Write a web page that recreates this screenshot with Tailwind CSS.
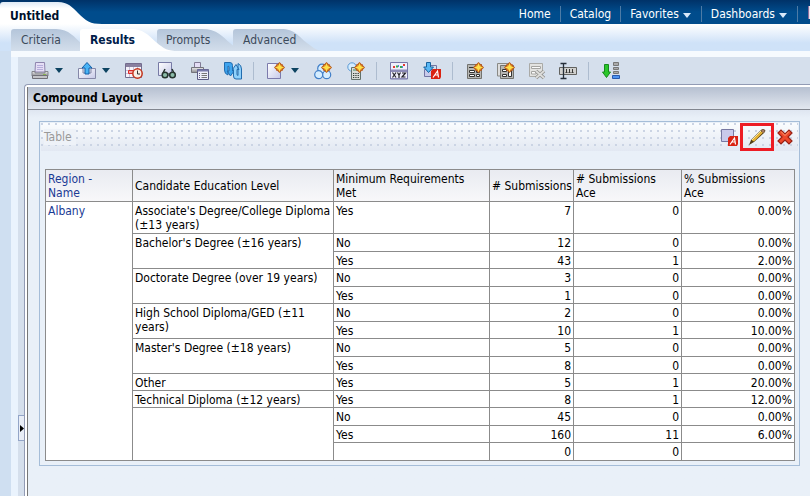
<!DOCTYPE html>
<html lang="en">
<head>
  <meta charset="UTF-8">
  <title>Untitled - Compound Layout</title>
  <meta name="viewport" content="width=device-width, initial-scale=1.0">
  <script src="https://cdn.jsdelivr.net/npm/@tailwindcss/browser@4"></script>
</head>
<body class="min-h-screen flex flex-col overflow-x-hidden bg-[#cfdff1] font-['DejaVu_Sans_Condensed','DejaVu_Sans',sans-serif] text-xs text-black">
  <!-- Shared shapes -->
  <svg class="absolute size-0" aria-hidden="true">
    <defs>
      <linearGradient id="tabFill" x1="0" y1="0" x2="0" y2="1"><stop offset="0" stop-color="#b4c5da"/><stop offset="1" stop-color="#d3deeb"/></linearGradient>
      <linearGradient id="whiteFill" x1="0" y1="0" x2="0" y2="1"><stop offset="0" stop-color="#dfeaf6"/><stop offset=".3" stop-color="#fff"/><stop offset="1" stop-color="#fff"/></linearGradient>
      <linearGradient id="metal" x1="0" y1="0" x2="0" y2="1"><stop offset="0" stop-color="#eee"/><stop offset="1" stop-color="#8a8a90"/></linearGradient>
      <linearGradient id="page" x1="0" y1="0" x2="1" y2="1"><stop offset="0" stop-color="#fff"/><stop offset="1" stop-color="#c6c9e8"/></linearGradient>
      <symbol id="star" viewBox="0 0 10 10"><path d="M5 0 7 2 8 2 8 3 10 5 8 7 8 8 7 8 5 10 3 8 2 8 2 7 0 5 2 3 2 2 3 2Z" fill="#b9561a"/><path d="M5 .8 6.300 3.700 9.200 5 6.300 6.300 5 9.200 3.700 6.300.8 5 3.700 3.700Z" fill="#ffe04a"/><path d="M2.500 2.500 4 3.500 3.500 4.500Z M7.500 2.500 6.500 4 6 3.500Z M7.500 7.500 6 6.500 6.500 6Z M2.500 7.500 3.500 6 4 6.500Z" fill="#f6a21c"/></symbol>
      <symbol id="redA" viewBox="0 0 10 10"><path d="M0 2 2 0H10V8L9 10H0Z" fill="#d92312"/><path d="M2 8.500 6.500 2 7.500 8.500M4 6H7" fill="none" stroke="#fff" stroke-width="1.200"/></symbol>
    </defs>
  </svg>

  <!-- Global header -->
  <header class="relative flex h-6 justify-between bg-linear-to-b from-[#003268] to-[#004c8c] to-50%">
    <button class="relative h-6 pl-[10px] pt-2 pr-10 text-left font-bold leading-4 text-[#00102c]">
      <svg class="absolute left-0 top-[2px] h-[22px] w-[102px]" viewBox="0 0 102 22"><path d="M0 22V3Q0 0 3 0H58C68 0 72 5 78 11C86 19 90 22 102 22Z" fill="url(#whiteFill)"/></svg>
      <span class="relative">Untitled</span>
    </button>
    <nav class="flex items-end pb-[2px] text-white leading-4">
      <a href="#" class="px-[9px]">Home</a>
      <a href="#" class="border-l border-[#4d7ba6] px-[9px]">Catalog</a>
      <a href="#" class="flex items-center gap-1 border-l border-[#4d7ba6] pl-[9px] pr-[10px]">Favorites
        <svg class="mt-[2px] h-[5px] w-2" viewBox="0 0 8 5"><path d="M0 0H8L4 5Z" fill="#d8e9fa"/></svg></a>
      <a href="#" class="flex items-center gap-1 border-l border-[#4d7ba6] pl-[9px] pr-[10px]">Dashboards
        <svg class="mt-[2px] h-[5px] w-2" viewBox="0 0 8 5"><path d="M0 0H8L4 5Z" fill="#d8e9fa"/></svg></a>
      <span class="flex border-l border-[#4d7ba6] pl-[10px]"><svg class="h-4 w-[2px]" viewBox="0 0 2 16"><path d="M0 0H2V13H0Z" fill="#e7e0ee"/><path d="M0 0H1V13H0Z" fill="#8d6f9c"/></svg></span>
    </nav>
  </header>

  <!-- Editor tabs -->
  <div class="flex h-[27px] bg-linear-to-b from-white to-[#cfe2f8] to-70% pl-[11px] leading-4 text-[#3c4a5a]">
    <button class="relative h-[27px] w-[69px] pl-[10px] pt-[5px] text-left">
      <svg class="absolute left-0 top-[5px] h-[22px] w-[80px]" viewBox="0 0 80 22"><path d="M0 22V3Q0 0 3 0H45C58 0 64 9 70 14C75 20 78 22 80 22Z" fill="url(#tabFill)"/></svg>
      <span class="relative">Criteria</span>
    </button>
    <button class="relative z-10 h-[27px] w-[77px] pl-[10px] pt-[5px] text-left font-bold text-[#00204a]">
      <svg class="absolute left-0 top-[5px] h-[22px] w-[98px]" viewBox="0 0 98 22"><path d="M0 22V3Q0 0 3 0H50C64 0 68 6 76 13C84 20 88 22 98 22Z" fill="#fff"/></svg>
      <span class="relative">Results</span>
    </button>
    <button class="relative h-[27px] w-[76px] pl-[9px] pt-[5px] text-left">
      <svg class="absolute left-0 top-[5px] h-[22px] w-[90px]" viewBox="0 0 90 22"><path d="M0 22V3Q0 0 3 0H45C60 0 66 8 73 14C80 20 82 22 90 22Z" fill="url(#tabFill)"/></svg>
      <span class="relative">Prompts</span>
    </button>
    <button class="relative h-[27px] w-[92px] pl-[10px] pt-[5px] text-left">
      <svg class="absolute left-0 top-[5px] h-[22px] w-[92px]" viewBox="0 0 92 22"><path d="M0 22V3Q0 0 3 0H48C62 0 66 8 74 14C82 20 84 22 92 22Z" fill="url(#tabFill)"/></svg>
      <span class="relative">Advanced</span>
    </button>
  </div>

  <main class="ml-[11px] flex flex-1 flex-col bg-[#eaf3fd] pl-[7px]">
    <div class="-ml-[7px] h-[6px] bg-[#f6fafe]"></div>
    <div class="relative flex flex-1 flex-col bg-[#d5dfec] pl-[6px]">
      <!-- Toolbar -->
      <div class="flex h-[27px] items-center pl-[7px]">
        <div class="flex gap-[15px]">
          <button class="flex w-8 items-center justify-between" aria-label="Print">
            <svg class="size-[18px]" viewBox="0 0 18 18"><path d="M4.500.5H13.500L14 10H4Z" fill="#e5def5" stroke="#8e84ad"/><path d="M6 3.500H12M6 5.500H12M6 7.500H12" stroke="#b6addb"/><path d="M1 9.500H4V11H14V9.500H17V14H1Z" fill="url(#metal)" stroke="#85858c"/><path d="M1.500 13.500H16.500V16.500H1.500Z" fill="#c4c4c8" stroke="#707078"/><path d="M12 12.500H15" stroke="#89b451"/></svg>
            <svg class="h-[5px] w-2" viewBox="0 0 8 5"><path d="M0 0H8L4 5Z" fill="#0d4361"/></svg>
          </button>
          <button class="flex w-8 items-center justify-between" aria-label="Export">
            <svg class="size-[18px]" viewBox="0 0 18 18"><path d="M.5 6.500H5V11H13V6.500H17.500V16.500H.5Z" fill="url(#page)" stroke="#8588a8"/><path d="M9 .5 14 6H11V12H7V6H4Z" fill="#48b3f5" stroke="#135fa8"/></svg>
            <svg class="h-[5px] w-2" viewBox="0 0 8 5"><path d="M0 0H8L4 5Z" fill="#0d4361"/></svg>
          </button>
          <button aria-label="Schedule">
            <svg class="size-[18px]" viewBox="0 0 18 18"><path d="M.5 1.500H16.500V15.500H.5Z" fill="#f5f3fa" stroke="#736c8e"/><path d="M1 2H16V5H1Z" fill="#89809f"/><path d="M1 8.500H16M1 11.500H16M4.500 5V15M8.500 5V15M12.500 5V15" stroke="#c8c2d8"/><path d="M3.500 8.500H9.500V11.500H3.500Z" fill="#f3a5a5" stroke="#dd2a2a"/><circle cx="12.500" cy="11.500" r="4.700" fill="#f9eee6" stroke="#c3331b" stroke-width="1.500"/><path d="M12.500 8.500V12H15" fill="none" stroke="#333"/></svg>
          </button>
          <button aria-label="Preview">
            <svg class="size-[18px]" viewBox="0 0 18 18"><path d="M.5.5H13.500V13.500H.5Z" fill="url(#page)" stroke="#777aa5"/><path d="M5 11 7 7M16 11 14 7" stroke="#26342f" stroke-width="1.500"/><circle cx="7" cy="13" r="2.800" fill="#8bbba9" stroke="#26342f" stroke-width="1.500"/><circle cx="14.500" cy="13" r="2.800" fill="#8bbba9" stroke="#26342f" stroke-width="1.500"/><path d="M9 12H12" stroke="#26342f"/></svg>
          </button>
          <button aria-label="Print options">
            <svg class="size-[18px]" viewBox="0 0 18 18"><path d="M3.500.5H9.500V5.500H3.500Z" fill="#e5def5" stroke="#827c96"/><path d="M.5 5.500H12.500V10.500H.5Z" fill="url(#metal)" stroke="#74747c"/><path d="M6.500 7.500H17.500V17.500H6.500Z" fill="#eeeefa" stroke="#5b5b85"/><path d="M6.500 8.500H17.500" stroke="#7778a9" stroke-width="2"/><path d="M8 11.500H9M8 13.500H9M8 15.500H9" stroke="#5b5b85"/><path d="M10.500 11.500H16M10.500 13.500H16M10.500 15.500H16" stroke="#777"/></svg>
          </button>
          <button aria-label="Refresh">
            <svg class="size-[18px]" viewBox="0 0 18 18"><path d="M.5.5H6Q8.500.5 8.500 3.500V9H10L6.500 14 3 9H5V5.500Q5 4 4 4V13Q.5 12 .5 8Z" fill="#3fa4ee" stroke="#226cae"/><path d="M17.500 17H12Q9.500 17 9.500 14V7.500H8.500L12 2.500 15 7.500H13V12Q13 13.500 14 13.500V1.500Q17.500 3 17.500 7Z" fill="#8fd0fb" stroke="#226cae"/></svg>
          </button>
        </div>
        <div class="ml-[11px] flex gap-[15px] border-l border-[#adbccf] pl-[13px]">
          <button class="flex w-8 items-center justify-between" aria-label="New view">
            <svg class="size-[18px]" viewBox="0 0 18 18"><path d="M.5 1.500H13.500V16.500H.5Z" fill="url(#page)" stroke="#7c7bac"/><use href="#star" x="7" y="0" width="11" height="11"/></svg>
            <svg class="h-[5px] w-2" viewBox="0 0 8 5"><path d="M0 0H8L4 5Z" fill="#0d4361"/></svg>
          </button>
          <button aria-label="New group">
            <svg class="size-[18px]" viewBox="0 0 18 18"><g fill="#d5edff" stroke="#417fc8" stroke-width="1.200"><circle cx="8" cy="6.500" r="4.300"/><circle cx="4.700" cy="12.700" r="4"/><circle cx="12.700" cy="12.700" r="4"/></g><use href="#star" x="7" y="0" width="11" height="11"/></svg>
          </button>
          <button aria-label="New calculated item">
            <svg class="size-[18px]" viewBox="0 0 18 18"><circle cx="5" cy="5" r="4.200" fill="#d5edff" stroke="#5c9ad5"/><path d="M4.500 5.500H13.500V17.500H4.500Z" fill="#d9ddd7" stroke="#62716a"/><path d="M6 7H12V9H6Z" fill="#8fb49c"/><path d="M6 11.500H12M6 13.500H12M6 15.500H12" stroke="#333d38" stroke-dasharray="1.300 1"/><use href="#star" x="7" y="0" width="11" height="11"/></svg>
          </button>
        </div>
        <div class="ml-[11px] flex gap-[15px] border-l border-[#adbccf] pl-[13px]">
          <button aria-label="Edit properties">
            <svg class="size-[18px]" viewBox="0 0 18 18"><path d="M.5.5H17.500V17H.5Z" fill="#f0effc" stroke="#7777a7"/><path d="M1 7.500H17V10H1Z" fill="#8c8bb8"/><path d="M1 16H17V17H1Z" fill="#8c8bb8"/><path d="M3 5H5M13 3H15" stroke="#e23b31" stroke-width="2"/><path d="M6 4.500H8M10 5H12" stroke="#36aa4d" stroke-width="2"/><path d="M8.500 3V5M12.500 4V6" stroke="#5286d9"/><path d="M2.500 10.500 6 15.500M6 10.500 2.500 15.500M7.500 10.500 9 13 10.500 10.500M9 13V16M12 11H15.500L12 15H15.500" fill="none" stroke="#202028" stroke-width="1.200"/></svg>
          </button>
          <button aria-label="Import formatting">
            <svg class="size-[18px]" viewBox="0 0 18 18"><path d="M1.500 7.500H11.500V14.500H1.500Z" fill="#c8caeb" stroke="#7275a3"/><path d="M8 3.500H13.500V8" fill="none" stroke="#7275a3"/><path d="M3.500.5H7.500V5H10.500L5.500 10.500 .7 5H3.500Z" fill="#58b7f4" stroke="#17629f"/><use href="#redA" x="8" y="7" width="10" height="10"/></svg>
          </button>
        </div>
        <div class="ml-[11px] flex gap-[13px] border-l border-[#adbccf] pl-[13px]">
          <button aria-label="Create dashboard prompt">
            <svg class="size-[18px]" viewBox="0 0 18 18"><path d="M1.500 2.500H15.500V16.500H1.500Z" fill="#b7b7b4" stroke="#73736f"/><path d="M3 5.500H9" stroke="#343432"/><path d="M3.500 8.500H8.500V10.500H3.500ZM10.500 8.500H13.500V10.500H10.500ZM3.500 12.500H8.500V14.500H3.500ZM10.500 12.500H13.500V14.500H10.500Z" fill="#fff" stroke="#343432"/><use href="#star" x="7" y="0" width="11" height="11"/></svg>
          </button>
          <button aria-label="Duplicate layout">
            <svg class="size-[18px]" viewBox="0 0 18 18"><path d="M.5 1.500H13V14H.5Z" fill="#ddd" stroke="#898985"/><path d="M3.500 3.500H16.500V16.500H3.500Z" fill="#b7b7b4" stroke="#73736f"/><path d="M5.500 7.500H9.500V9.500H5.500ZM11.500 8.500H14.500V14.500H11.500ZM5.500 12.500H9.500V14.500H5.500Z" fill="#fff" stroke="#343432"/><use href="#star" x="7" y="0" width="11" height="11"/></svg>
          </button>
          <button aria-label="Delete layout" disabled>
            <svg class="size-[18px]" viewBox="0 0 18 18"><path d="M1.500 1.500H14.500V14.500H1.500Z" fill="#e3e3e1" stroke="#aaaaa7"/><path d="M3.500 4.500H12.500V6.500H3.500ZM3.500 9.500H8V12H3.500Z" fill="#fafafa" stroke="#a5a5a2"/><path d="M8 9 16 16M16 9 8 16" stroke="#929290" stroke-width="3.600"/><path d="M8 9 16 16M16 9 8 16" stroke="#dededc" stroke-width="1.800"/></svg>
          </button>
          <button aria-label="Rename layout">
            <svg class="size-[18px]" viewBox="0 0 18 18"><path d="M.5 5.500H17.500V12.500H.5Z" fill="#d0d0ce" stroke="#62625f"/><path d="M7.500 7V11M10.500 7V11M13.500 7V11M6.500 10.500H8.500M9.500 10.500H11.500M12.500 10.500H14.500" stroke="#373735"/><path d="M1.500 1.500H4L4.500 2.500 5 1.500H7.500M1.500 16.500H4L4.500 15.500 5 16.500H7.500M4.500 2V16" fill="none" stroke="#252e39" stroke-width="1.300"/></svg>
          </button>
        </div>
        <div class="ml-[11px] flex border-l border-[#adbccf] pl-[13px]">
          <button aria-label="Move to bottom">
            <svg class="size-[18px]" viewBox="0 0 18 18"><path d="M2.500 2.500H6.500V10H8.500L4.500 15.500.5 10H2.500Z" fill="#2ac62a" stroke="#168b1b"/><g fill="#aaa" stroke="#777"><path d="M11.500.5H16.500V3.500H11.500Z"/><path d="M11.500 5.500H16.500V7.500H11.500Z"/><path d="M11.500 9.500H16.500V11.500H11.500Z"/></g><path d="M10.500 13.500H17.500V16.500H10.500Z" fill="#4d93f1" stroke="#2559ae"/></svg>
          </button>
        </div>
      </div>

      <!-- Pane splitter handle -->
      <button class="absolute bottom-[55px] left-0 flex h-[26px] w-[6px] items-center justify-end border border-r-0 border-[#93a5c8] bg-[#e8edf6]" aria-label="Expand pane">
        <svg class="h-[7px] w-[4px]" viewBox="0 0 4 7"><path d="M0 0 4 3.500 0 7Z" fill="#000"/></svg>
      </button>

      <!-- Compound layout -->
      <section class="flex flex-1 flex-col rounded-tl-sm border-l border-t border-[#929bb4] bg-white pl-[2px] pt-[2px]">
        <div class="flex flex-1 flex-col border-l border-[#777] bg-[#e9f0f8]">
          <h1 class="h-[23px] border-b border-[#81858e] bg-linear-to-b from-[#b6c0d1] to-[#e2e7ef] pl-[5px] text-xs font-bold leading-[22px]">Compound Layout</h1>
          <div class="flex-1 bg-linear-to-b from-[#dfe6f1] to-[#e9f0f8] to-[8px] pb-[29px] pl-[11px] pr-[10px] pt-[11px]">
            <div class="border border-[#a5bdd8] p-px pb-[4px]">
              <div class="flex h-7 items-center justify-between bg-[#e6ecf6] bg-[radial-gradient(circle_at_1px_1px,#cbd4e4_1px,transparent_1px),linear-gradient(to_bottom,#fafcfe,#e2e8f2)] bg-[length:7px_7px,100%_100%] pl-[3px]">
                <h2 class="bg-[#eef2f8] pr-1 leading-4 text-[#999]">Table</h2>
                <div class="flex items-center">
                  <button class="mr-[2px]" aria-label="Format container">
                    <svg class="size-[17px]" viewBox="0 0 17 17"><path d="M.5.5H12.500V12.500H.5Z" fill="#c9caeb" stroke="#7778a2"/><use href="#redA" x="7" y="7" width="10" height="10"/></svg>
                  </button>
                  <button class="flex h-7 w-[34px] items-center justify-center border-3 border-[#ed1c24]" aria-label="Edit view">
                    <svg class="size-[18px]" viewBox="0 0 18 18"><path d="M1 17 3 12 13 2Q15 0 17 2Q18 3 16 5L6 14Z" fill="#503d17"/><path d="M4 12.500 13 3.500 15 4.500 6 13.500Z" fill="#ebb735"/><path d="M4 12 13 3" stroke="#ffe890"/><path d="M13 2.800 15.300 5 16.500 3.700Q17 2 15 1.300Z" fill="#a77b64"/></svg>
                  </button>
                  <button class="ml-[3px] mr-[5px]" aria-label="Remove view">
                    <svg class="size-4" viewBox="0 0 16 16"><path d="M1 4 4 1 8 5 12 1 15 4 11 8 15 12 12 15 8 11 4 15 1 12 5 8Z" fill="#ee482b" stroke="#982115" stroke-width="1.200"/><path d="M4 2.500 8 6.500 12 2.500" fill="none" stroke="#ffa077"/></svg>
                  </button>
                </div>
              </div>

              <div class="px-[4px] pt-[18px]">
                <table class="w-full table-fixed border-collapse bg-white leading-[14px] [&_td]:border [&_td]:border-[#8b8b8b] [&_td]:px-[2px] [&_td]:align-top [&_th]:border [&_th]:border-[#8b8b8b] [&_th]:px-[2px] [&_th]:text-left [&_th]:font-normal">
                  <colgroup>
                    <col class="w-[87px]"><col class="w-[201px]"><col class="w-[156px]"><col class="w-[84px]"><col class="w-[108px]"><col class="w-[113px]">
                  </colgroup>
                  <thead>
                    <tr class="h-8 bg-linear-to-b from-[#e9ebf1] to-[#f8f8fa]">
                      <th class="text-[#1a3a94]">Region -<br>Name</th>
                      <th>Candidate Education Level</th>
                      <th>Minimum Requirements<br>Met</th>
                      <th class="whitespace-nowrap"># Submissions</th>
                      <th># Submissions<br>Ace</th>
                      <th>% Submissions<br>Ace</th>
                    </tr>
                  </thead>
                  <tbody id="rows"></tbody>
                </table>
              </div>
            </div>
          </div>
        </div>
      </section>
    </div>
  </main>

  <script>
    const groups = [
      { level: "Associate's Degree/College Diploma<br>(±13 years)", height: 'h-8', rows: [['Yes', '7', '0', '0.00%']] },
      { level: "Bachelor's Degree (±16 years)", height: 'h-[35px]', rows: [['No', '12', '0', '0.00%'], ['Yes', '43', '1', '2.00%']] },
      { level: 'Doctorate Degree (over 19 years)', height: 'h-[35px]', rows: [['No', '3', '0', '0.00%'], ['Yes', '1', '0', '0.00%']] },
      { level: 'High School Diploma/GED (±11<br>years)', height: 'h-[35px]', rows: [['No', '2', '0', '0.00%'], ['Yes', '10', '1', '10.00%']] },
      { level: "Master's Degree (±18 years)", height: 'h-[35px]', rows: [['No', '5', '0', '0.00%'], ['Yes', '8', '0', '0.00%']] },
      { level: 'Other', height: 'h-[17px]', rows: [['Yes', '5', '1', '20.00%']] },
      { level: 'Technical Diploma (±12 years)', height: 'h-[17px]', rows: [['Yes', '8', '1', '12.00%']] },
      { level: '', height: 'h-[53px]', rows: [['No', '45', '0', '0.00%'], ['Yes', '160', '11', '6.00%'], ['', '0', '0', '']] }
    ];
    const total = groups.reduce((n, g) => n + g.rows.length, 0);

    let html = '';
    groups.forEach((g, gi) => {
      g.rows.forEach((r, ri) => {
        html += '<tr class="h-[17px]">';
        if (gi === 0 && ri === 0) html += `<td rowspan="${total}" class="text-[#1a3a94]"><span class="block pt-[2px]">Albany</span></td>`;
        if (ri === 0) html += `<td rowspan="${g.rows.length}" class="${g.height} whitespace-nowrap"><span class="block pt-[2px]">${g.level}</span></td>`;
        html += `<td><span class="block pt-[2px]">${r[0]}</span></td>`;
        r.slice(1).forEach(v => {
          html += `<td class="text-right"><span class="block pt-[2px]">${v}</span></td>`;
        });
        html += '</tr>';
      });
    });
    document.getElementById('rows').innerHTML = html;
  </script>
</body>
</html>
